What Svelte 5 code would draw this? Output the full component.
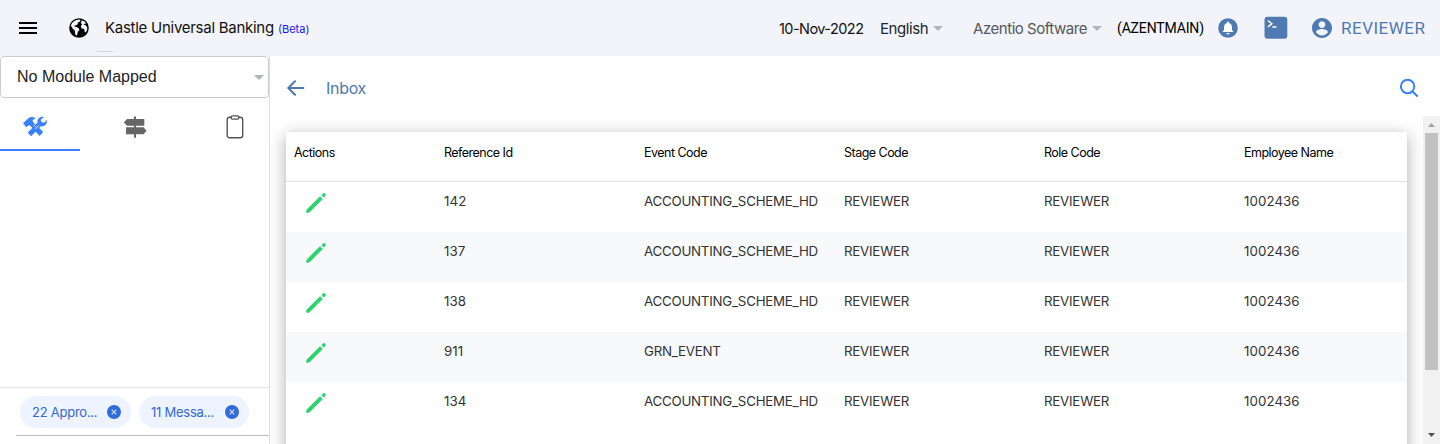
<script>
  const columns = ['Actions', 'Reference Id', 'Event Code', 'Stage Code', 'Role Code', 'Employee Name'];
  const rows = [
    ['142', 'ACCOUNTING_SCHEME_HD', 'REVIEWER', 'REVIEWER', '1002436'],
    ['137', 'ACCOUNTING_SCHEME_HD', 'REVIEWER', 'REVIEWER', '1002436'],
    ['138', 'ACCOUNTING_SCHEME_HD', 'REVIEWER', 'REVIEWER', '1002436'],
    ['911', 'GRN_EVENT', 'REVIEWER', 'REVIEWER', '1002436'],
    ['134', 'ACCOUNTING_SCHEME_HD', 'REVIEWER', 'REVIEWER', '1002436']
  ];
  const chips = ['22 Appro...', '11 Messa...'];
</script>

<div class="app">
  <header>
    <svg class="menu" width="18" height="12" viewBox="0 0 18 12"><path d="M0 0h18v2H0zM0 5h18v2H0zM0 10h18v2H0z" /></svg>
    <svg class="globe" width="20" height="20" viewBox="0 0 20 20">
      <circle cx="10" cy="10" r="9.8" />
      <path fill="#f3f4f9" d="M7.200 2.100 10.600 1.500 11.600 2.600 10 4.300 8.600 4.600 8.900 6 7.300 7.300 5.500 7.500 5.800 8.800 7.700 9 9.900 10.400 10.400 12.200 8.800 13.800 8.300 16.400 7.200 18 6 15.400 5.800 12.600 3.900 10.900 2.600 8.500 1.800 8.400 2.600 5.600 4.600 3.400zM12.900 2.300 15.600 3.600 17.200 5.500 15.400 5.700 14.600 6.700 16.800 7.200 18.300 9.400 18 12.400 16.600 14.600 15.400 13.600 15.500 11.600 14.200 10.800 12.300 10.200 11.900 8 13.100 6.300 11.900 4.900z" />
    </svg>
    <div class="brand"><span class="title">Kastle Universal Banking</span><span class="beta">(Beta)</span><i class="tick"></i></div>
    <span class="date">10-Nov-2022</span>
    <span class="lang">English</span><i class="caret"></i>
    <span class="company">Azentio Software</span><i class="caret"></i>
    <span class="code">(AZENTMAIN)</span>
    <svg class="bell" width="20" height="20" viewBox="0 0 20 20">
      <circle cx="10" cy="10" r="9.8" fill="#4d7ab2" />
      <path fill="#fff" d="M10 3.600c.6 0 1 .4 1 1v.3c1.800.5 3 2.100 3 4.100v3l1.200 1.300v.6H4.800v-.6L6 12V9c0-2 1.200-3.600 3-4.100v-.3c0-.6.4-1 1-1zM8.400 14.900h3.200a1.600 1.600 0 0 1-3.200 0z" />
    </svg>
    <svg class="term" width="24" height="24" viewBox="0 0 24 24">
      <rect x=".5" y=".8" width="22.800" height="22" rx="3" fill="#4d7ab2" />
      <path d="m4 4.500 3.800 3.200L4 10.900M8.300 10.900h4.200" fill="none" stroke="#fff" stroke-width="1.500" />
    </svg>
    <svg class="user" width="24" height="24" viewBox="0 0 24 24">
      <path fill="#4d7ab2" d="M12 2C6.480 2 2 6.480 2 12s4.480 10 10 10 10-4.480 10-10S17.520 2 12 2zm0 3.200c1.900 0 3.400 1.500 3.400 3.400S13.900 12 12 12s-3.400-1.500-3.400-3.400S10.100 5.200 12 5.200zm0 14.200c-2.500 0-4.710-1.280-6-3.220.03-1.990 4-3.080 6-3.080s5.970 1.090 6 3.080c-1.290 1.940-3.500 3.220-6 3.220z" />
    </svg>
    <span class="reviewer">REVIEWER</span>
  </header>

  <div class="body">
    <aside>
      <div class="select"><span>No Module Mapped</span><i class="caret"></i></div>
      <nav>
        <div class="tab active">
          <svg width="24" height="21" viewBox="0 0 24 21">
            <path fill="#3880ff" d="M0 7.200 6.300 1.500C8 .5 10.800.8 12.700 2L9.600 4.200l.6 2.100 10 9.700-3.600 4.100L7.300 9.800 5.500 9.200 3.300 11.200z" />
            <path fill="#3880ff" d="M20.800.9c-2.700-.8-6 .8-6.400 4.100l.1 1.700L4.700 16.400l3.400 3.800 9.700-9.900c3.200.7 6.500-1.700 6.100-6.300l-3 2.700-2.500-.6-.6-2.400z" />
            <path stroke="#fff" stroke-width=".9" d="m10.700 8.800 2 2M12.500 13l3.300-3.500" />
          </svg>
        </div>
        <div class="tab second">
          <svg width="24" height="23" viewBox="0 0 24 23"><path fill="#666" d="M11 .5h2V3h8.300v6.800H13v1.400h7.500l3.100 3.500-3.100 3.500H13v3.500h-2v-3.500H3v-7h8V9.800H4L.8 6.400 4 3h7z" /></svg>
        </div>
        <div class="tab third">
          <svg width="18" height="24" viewBox="0 0 18 24" fill="none" stroke="#555" stroke-width="1.400"><rect x="1.200" y="2.200" width="15.500" height="20.500" rx="2.500" /><rect x="5.200" y=".9" width="7.500" height="3.200" rx="1" fill="#fff" /></svg>
        </div>
      </nav>
      <div class="foot">
        <div class="chips">
          {#each chips as chip}
            <div class="chip">
              <span>{chip}</span>
              <svg width="14" height="14" viewBox="0 0 14 14"><circle cx="7" cy="7" r="7" fill="#2f6bdc" /><path d="m4.700 4.700 4.600 4.600M9.300 4.700 4.700 9.300" stroke="#dce8ff" stroke-width="1.100" /></svg>
            </div>
          {/each}
        </div>
      </div>
    </aside>

    <main>
      <div class="toolbar">
        <svg width="18" height="16" viewBox="0 0 18 16" fill="none" stroke="#4d7ab2" stroke-width="2" stroke-linecap="round" stroke-linejoin="round"><path d="M8 1.200 1.300 8 8 14.800M1.600 8H16.300" /></svg>
        <span class="inbox">Inbox</span>
        <svg class="search" width="20" height="20" viewBox="0 0 20 20" fill="none" stroke="#3880ff" stroke-width="2"><circle cx="8.600" cy="8.500" r="6.700" /><path d="m13.300 13.200 5.400 5.300" /></svg>
      </div>
      <div class="content">
        <div class="scroll">
          <div class="table">
            <div class="row head">
              {#each columns as c}<span>{c}</span>{/each}
            </div>
            {#each rows as r}
              <div class="row">
                <span class="edit"><svg width="22" height="22" viewBox="0 0 22 22" stroke="#2dd36f" stroke-linecap="round"><path d="M3.200 18.800 16.400 5.600" stroke-width="4" stroke-linecap="butt" /><path d="M2.600 19.400 4.500 17.500" stroke-width="3" /><path d="m18.700 3.300.3-.3" stroke-width="3.600" /></svg></span>
                {#each r as cell}<span class:num={/^\d/.test(cell)}>{cell}</span>{/each}
              </div>
            {/each}
          </div>
        </div>
        <div class="bar">
          <svg width="7" height="4" viewBox="0 0 7 4"><path fill="#a3a3a3" d="M3.500 0 7 4H0z" /></svg>
          <div class="thumb"></div>
          <svg width="7" height="4" viewBox="0 0 7 4"><path fill="#505050" d="M3.500 4 0 0h7z" /></svg>
        </div>
      </div>
    </main>
  </div>
</div>

<style>
  .app { width: 1440px; height: 444px; overflow: hidden; display: flex; flex-direction: column; font-family: Inter, "Noto Sans", sans-serif; background: #fff; }
  svg { display: block; flex: none; }
  span { white-space: nowrap; }
  header { height: 56px; flex: none; display: flex; align-items: center; background: #f3f4f9; font-size: 15px; color: #111; }
  header > * { flex: none; }
  .menu { margin-left: 19px; }
  .globe { margin-left: 32px; }
  .brand { margin-left: 16px; width: 674px; height: 20px; line-height: 20px; position: relative; display: flex; align-items: baseline; }
  .title { width: 173px; letter-spacing: -0.27px; }
  .beta { font-size: 11px; color: #1414ff; }
  .tick { position: absolute; left: -8px; top: 33px; width: 16px; height: 1px; background: #d3d5dc; }
  .date { width: 101px; font-size: 14.5px; letter-spacing: -0.55px; }
  .lang { width: 53px; color: #222428; letter-spacing: -0.42px; }
  .caret { width: 0; height: 0; border: 5px solid transparent; border-top-color: #b3b4b7; border-bottom: 0; }
  .company { margin-left: 30px; width: 119px; color: #55575b; letter-spacing: -0.46px; }
  .code { margin-left: 15px; width: 101px; font: 14px Roboto, sans-serif; letter-spacing: -0.15px; color: #000; }
  .term { margin-left: 26px; }
  .user { margin-left: 22px; }
  .reviewer { margin-left: 7px; font: 17px Roboto, sans-serif; letter-spacing: 0.5px; color: #4d7ab2; }
  .body { flex: 1; min-height: 0; display: flex; }
  aside { width: 269px; flex: none; border-right: 1px solid #dedede; display: flex; flex-direction: column; }
  .select { box-sizing: border-box; height: 42px; flex: none; border: 1px solid #c9ccd5; border-radius: 4px; padding: 0 4px 0 16px; display: flex; align-items: center; justify-content: space-between; font: 16px "Liberation Sans", Arial, sans-serif; color: #222; }
  nav { display: flex; height: 53px; }
  .tab { box-sizing: border-box; flex: none; width: 80px; display: flex; padding: 18px 0 0 23px; }
  .active { border-bottom: 2px solid #3880ff; }
  .second { width: 111px; padding-left: 43px; }
  .third { width: 78px; padding: 17px 0 0 35px; }
  .foot { margin-top: auto; height: 57px; border-top: 1px solid #e2e2e2; box-sizing: border-box; }
  .chips { margin-left: 16px; height: 48px; border-bottom: 1px solid #bdbdbd; display: flex; gap: 8px; padding: 8px 0 0 4px; box-sizing: border-box; }
  .chip { box-sizing: border-box; height: 32px; width: 111px; border-radius: 16px; background: #edf4ff; display: flex; align-items: center; justify-content: space-between; padding: 0 10px 0 12px; color: #3269d4; font-size: 13px; letter-spacing: -0.25px; }
  .chip + .chip { width: 110px; }
  main { flex: 1; display: flex; flex-direction: column; min-width: 0; }
  .toolbar { height: 60px; flex: none; display: flex; align-items: center; padding: 4px 21px 0 17px; box-sizing: border-box; }
  .inbox { margin-left: 21px; color: #4d7ab2; font-size: 16px; letter-spacing: -0.3px; }
  .search { margin-left: auto; }
  .content { flex: 1; display: flex; min-height: 0; overflow: hidden; }
  .scroll { flex: 1; padding: 16px 16px 0 16px; }
  .table { width: 1121px; height: 500px; background: #fff; box-shadow: 0 4px 16px rgba(0, 0, 0, 0.33); }
  .row { display: grid; grid-template-columns: 150px 200px 200px 200px 200px 1fr; height: 50px; padding: 0 8px; box-sizing: border-box; font-size: 13.3px; line-height: 39px; letter-spacing: -0.23px; color: #333; }
  .num { letter-spacing: 0.08px; }
  .head { border-bottom: 1px solid #dedede; font-size: 12.5px; line-height: 42px; letter-spacing: -0.52px; color: #000; }
  .row:nth-child(odd):not(.head) { background: #f8f9fb; }
  .edit { padding: 10px 0 0 11px; }
  .bar { width: 17px; flex: none; background: #f1f1f1; display: flex; flex-direction: column; align-items: center; padding: 7px 0; box-sizing: border-box; }
  .thumb { width: 13px; height: 237px; margin: 6px 0 auto; background: #c1c1c1; }
</style>
